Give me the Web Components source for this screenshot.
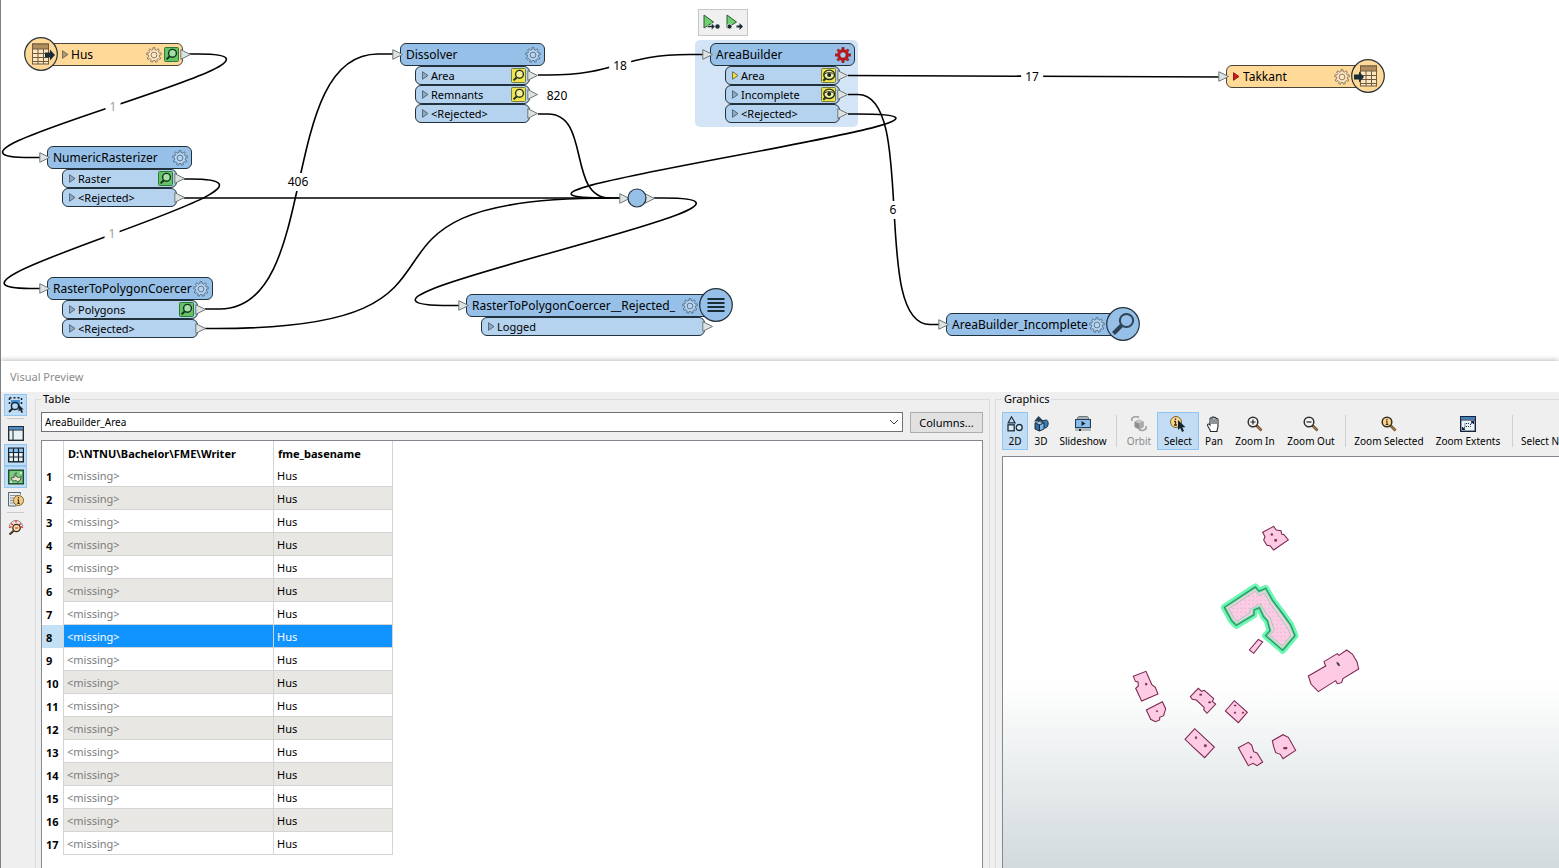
<!DOCTYPE html>
<html lang="en">
<head>
<meta charset="utf-8">
<title>FME Workbench</title>
<style>
  html, body { margin: 0; height: 100%; }
  body { font-family: "Noto Sans", "Open Sans", sans-serif; font-size: 11px; color: #000; overflow: hidden; background: #fff; }
</style>
</head>
<body>
<fme-app></fme-app>
<script>
function gear(cx, cy, ro, ri, n) {
  const p = [];
  for (let i = 0; i < n; i++) {
    const a = i * 2 * Math.PI / n - Math.PI / 2, w = Math.PI / n;
    for (const [d, r] of [[-.95, ri], [-.5, ri], [-.38, ro], [.38, ro], [.5, ri]])
      p.push((cx + r * Math.cos(a + d * w)).toFixed(2) + ',' + (cy + r * Math.sin(a + d * w)).toFixed(2));
  }
  return p.join(' ');
}
const lens = (fill, extra = '') => `<path d="M9.500 9.500L14.500 14.500" stroke="#5f4526" stroke-width="2.600"/><path d="M10 10l4.500 4.500" stroke="#a87b45" stroke-width="1.200"/><circle cx="6" cy="6" r="4.800" fill="${fill}" stroke="#33302c" stroke-width="1.500"/>${extra}`;
const bigTable = x => `<rect x="${x}" y="5" width="16" height="20" fill="#fde6bd" stroke="#6e5b42" /><rect x="${x}" y="5" width="16" height="5" fill="#b08d5c" stroke="#6e5b42"/><path d="M${x} 14.500h16M${x} 18.500h16M${x} 22.500h16M${x + 5.500} 10v15M${x + 11} 10v15" stroke="#6e5b42" fill="none"/>`;
const ICONS = {
  gear: ['0 0 16 16', `<polygon points="${gear(8, 8, 7.4, 5.5, 9)}" fill="#ffffff55" stroke="#4f6d8a" stroke-width=".9"/><circle cx="8" cy="8" r="2.900" fill="none" stroke="#4f6d8a" stroke-width=".9"/>`],
  gearTan: ['0 0 16 16', `<polygon points="${gear(8, 8, 7.4, 5.5, 9)}" fill="#ffffff66" stroke="#84725a" stroke-width=".9"/><circle cx="8" cy="8" r="2.900" fill="none" stroke="#84725a" stroke-width=".9"/>`],
  gearRed: ['0 0 16 16', `<polygon points="${gear(8, 8, 7.6, 5.4, 8)}" fill="#c81414" stroke="#7c1010" stroke-width=".6"/><circle cx="8" cy="8" r="3.100" fill="#a9cdef" stroke="#7c1010" stroke-width=".6"/>`],
  green: ['0 0 15 15', `<rect x=".5" y=".5" width="14" height="14" rx="1" fill="#66c266" stroke="#2d7a37"/><path d="M5.800 9.200L2.600 12.400" stroke="#14301c" stroke-width="2"/><circle cx="8.500" cy="6.300" r="3.900" fill="#a5e0a8" stroke="#14301c" stroke-width="1.400"/>`],
  yellow: ['0 0 15 15', `<rect x=".5" y=".5" width="14" height="14" rx="1" fill="#f0e34e" stroke="#7a7c3c"/><path d="M5.800 9.200L2.600 12.400" stroke="#26331c" stroke-width="2"/><circle cx="8.500" cy="6.300" r="3.900" fill="#f6ef9a" stroke="#26331c" stroke-width="1.400"/>`],
  eye: ['0 0 15 15', `<rect x=".5" y=".5" width="14" height="14" rx="1" fill="#f0e34e" stroke="#7a7c3c"/><path d="M5 10L2.300 12.700" stroke="#26331c" stroke-width="2"/><ellipse cx="8.200" cy="6.800" rx="5.400" ry="4.700" fill="#f6ef9a" stroke="#26331c" stroke-width="1.400"/><path d="M3 6.800C5 3.900 11.400 3.900 13.400 6.800" stroke="#26331c" stroke-width="1"/><circle cx="8.200" cy="7" r="2" fill="#14222c"/>`],
  tri: ['0 0 8 9', `<path d="M1.500 .7L7 4.500L1.500 8.300Z" fill="#8fa9bf" stroke="#4b6274" stroke-width=".9"/>`],
  triTan: ['0 0 8 9', `<path d="M1.500 .7L7 4.500L1.500 8.300Z" fill="#b09a72" stroke="#6e6350" stroke-width=".9"/>`],
  triYellow: ['0 0 8 9', `<path d="M1.500 .7L7 4.500L1.500 8.300Z" fill="#f4e23c" stroke="#5e6444" stroke-width=".9"/>`],
  triRed: ['0 0 8 9', `<path d="M1.500 .7L7 4.500L1.500 8.300Z" fill="#d01a1a" stroke="#8a1010" stroke-width=".9"/>`],
  port: ['0 0 11 11', `<path d="M.8 .7L10.500 5.500L.8 10.300Z" fill="#dde2e2" stroke="#6f7878" stroke-width="1"/>`],
  reader: ['0 0 34 34', `<circle cx="17" cy="17" r="16.300" fill="#ffd998" stroke="#2b3238" stroke-width="1.200"/><g transform="translate(0 2)">${bigTable(8.5)}</g><path d="M21 15.500h5v-3l5 5.500l-5 5.500v-3h-5z" fill="#1b2c36"/>`],
  writer: ['0 0 34 34', `<circle cx="17" cy="17" r="16.300" fill="#ffd998" stroke="#2b3238" stroke-width="1.200"/><g transform="translate(0 2)">${bigTable(9.5)}</g><path d="M3 15.500h5v-3l5 5.500l-5 5.500v-3h-5z" fill="#1b2c36"/>`],
  logger: ['0 0 34 34', `<circle cx="17" cy="17" r="16.300" fill="#97c0e8" stroke="#22323c" stroke-width="1.200"/><path d="M8.500 11h17M8.500 15h17M8.500 19h17M8.500 23h17" stroke="#1b2c36" stroke-width="2.200"/>`],
  inspector: ['0 0 34 34', `<circle cx="17" cy="17" r="16.300" fill="#97c0e8" stroke="#22323c" stroke-width="1.200"/><path d="M15.500 18.500L7.500 26.500" stroke="#2f4254" stroke-width="4"/><circle cx="20.500" cy="13.500" r="6.600" fill="none" stroke="#2f4254" stroke-width="2"/>`],
  junction: ['0 0 20 20', `<circle cx="10" cy="10" r="9" fill="#97c0e8" stroke="#22323c" stroke-width="1.200"/>`],
  runTo: ['0 0 17 17', `<path d="M1 1L10.500 8L1 14Z" fill="#6ed06e" stroke="#2a5a34"/><path d="M4.500 11.500h4v-2.500l3.500 3.500l-3.500 3.500v-2.500h-4z" fill="#1b2c36" stroke="#efefef" stroke-width=".5"/><circle cx="14.500" cy="12.500" r="2.200" fill="#1b2c36"/>`],
  runFrom: ['0 0 17 17', `<path d="M1 1L10.500 8L1 14Z" fill="#6ed06e" stroke="#2a5a34"/><circle cx="3.500" cy="12.500" r="2.500" fill="#1b2c36" stroke="#efefef" stroke-width=".8"/><path d="M10.500 11.500h3v-2.500l3.500 3.500l-3.500 3.500v-2.500h-3z" fill="#1b2c36"/>`],
  selectArea: ['0 0 16 16', `<rect x="3" y="3" width="9" height="6" fill="#4a90d9"/><path d="M1.500 .8h12M1.500 1v8M13.500 1v7" stroke="#14242e" stroke-width="1.500" stroke-dasharray="2 2" fill="none"/><path d="M4.500 11.500L1 15" stroke="#14242e" stroke-width="2"/><circle cx="7" cy="9" r="3.600" fill="#b9d9f3" stroke="#14242e" stroke-width="1.500"/><path d="M10.500 7.500v7l1.600-1.500l1.400 3l1.500-.8l-1.300-2.700h2z" fill="#14242e"/>`],
  panel: ['0 0 16 16', `<rect x=".7" y="1.700" width="14.600" height="13.600" fill="#e9f2f4" stroke="#14242e" stroke-width="1.300"/><rect x="1.300" y="2" width="13.400" height="2.600" fill="#4a8fcb"/><path d="M1 5h14M5 5v10" stroke="#14242e" fill="none"/>`],
  grid: ['0 0 16 16', `<rect x=".7" y="1.200" width="14.600" height="13.600" fill="#e9f2f4" stroke="#14242e" stroke-width="1.400"/><rect x="1.300" y="1.700" width="13.400" height="3.800" fill="#8cc0ee"/><path d="M1 5.500h14M1 10h14M5.500 1v14M10.500 1v14" stroke="#14242e" stroke-width="1.200" fill="none"/>`],
  map: ['0 0 16 16', `<rect x=".7" y="1.200" width="14.600" height="13.600" fill="#7ccb80" stroke="#1c4a2c" stroke-width="1.400"/><path d="M3 9l3.200-.6v-2.600l2-2.300l-.6 3.700l3 1.300l2.600-1l-.8 3.500l-1.600 1l-.8 1.500l-1.400-1.800h-2.400l-1 .6z" fill="#eee2c6" stroke="#2a4436" stroke-width=".8"/><circle cx="3" cy="13" r="1" fill="#e8f5e8"/><circle cx="13" cy="4" r="1" fill="#e8f5e8"/>`],
  info: ['0 0 16 16', `<path d="M.5 1.500h12v2M.5 1v14h8" stroke="#5c6870" fill="#dfe6e8"/><path d="M2 4.500h9M2 7h5M2 9.500h4M2 12h5" stroke="#8a979e"/><circle cx="10.500" cy="9.500" r="5" fill="#f6cd80" stroke="#7c6233"/><path d="M10.500 8.500v4M10.500 6v1.400M9.500 8.800h1M9.300 12.300h2.500" stroke="#3c2f18" stroke-width="1.200"/>`],
  inspectRed: ['0 0 16 16', `<path d="M1 7C4 -.5 12 -.5 15 7" fill="#f6e4dc" stroke="#8d8078" stroke-width=".9"/><path d="M3 4.500l2 1.500M8 1.500v2M13 4.500l-2 1.500M1 8.500l2.500-.8M15 8.500l-2.500-.8" stroke="#d33" stroke-width="1.400"/><path d="M6 11.500L1.500 15.500" stroke="#4b3a2c" stroke-width="2.200"/><circle cx="8.500" cy="9" r="3.700" fill="#ffe0a0" stroke="#2f2a26" stroke-width="1.300"/><path d="M7 9h3" stroke="#e44" stroke-width="1.400"/>`],
  two: ['0 0 16 16', `<path d="M4.500 .8L8 6.800H1.200Z" fill="#c3dcf0" stroke="#1b2c3c" stroke-width="1.200"/><rect x="1" y="8.800" width="6.200" height="6" fill="#dcebf7" stroke="#1b2c3c" stroke-width="1.300"/><circle cx="12.200" cy="11.500" r="3" fill="#dcebf7" stroke="#1b2c3c" stroke-width="1.300"/>`],
  three: ['0 0 16 16', `<path d="M5.500 0L11 5.500H1z" fill="#22425c"/><path d="M9 5l4-1c3 0 3 8-1 8l-3-1z" fill="#3c7cb4" stroke="#1b2c3c"/><path d="M2 7l4.500 1.500V15L2 13z" fill="#2f6ca4" stroke="#1b2c3c"/><path d="M6.500 8.500L11 7v6l-4.500 2z" fill="#7cb4e4" stroke="#1b2c3c"/><path d="M2 7l4-1.500L11 7L6.500 8.500z" fill="#b9dcf6" stroke="#1b2c3c" stroke-width=".7"/>`],
  slide: ['0 0 16 16', `<path d="M2.500 1.500L4 .5h8l1.500 1v2h-11z" fill="#a8b2b6" stroke="#6d787e"/><path d="M.5 3.500h15v8H.5z" fill="#8ebdec" stroke="#22425c" stroke-width="1.200"/><path d="M6.500 5l4 2.500l-4 2.500z" fill="#14242e"/><path d="M0 12h16v3H0z" fill="#b2babd"/><path d="M4 13h2v2H4z" fill="#14242e"/>`],
  orbit: ['0 0 16 16', `<path d="M1 5C-.5 1 5 -.5 8 1.500M15 10c1.500 4-4 5.500-7 3.500" stroke="#a5a5a5" stroke-width="1.800" fill="none"/><path d="M3.500 5.500L8 3.500L12.500 5.500V11L8 13.500L3.500 11z" fill="#8e8e8e"/><path d="M3.500 5.500L8 7.500L12.500 5.500L8 3.500z" fill="#c6c6c6"/><path d="M8 7.500v6l4.500-2.500V5.500z" fill="#a9a9a9"/>`],
  select: ['0 0 16 16', `<circle cx="6" cy="6" r="5.500" fill="#f9d58f" stroke="#7c6233"/><path d="M5.500 5v4M5.500 2.500v1.500M4 5.300h1.500M4 9h3" stroke="#3c2f18" stroke-width="1.300"/><path d="M8 4v10l2.300-2l1.700 4l2-.9l-1.700-3.800H15.500z" fill="#14242e"/>`],
  pan: ['0 0 16 16', `<path d="M4.500 15.500C4 12.500 1.500 11 1.500 9c0-1.200 1.300-1.500 2.500 0V3c0-1.600 2-1.600 2 0v-1c0-1.600 2-1.600 2 0v0.500c0-1.600 2-1.600 2 0v1c0-1.400 2-1.400 2 0V10c0 2-1 3-1 5.500z" fill="#fff" stroke="#1f2a30" stroke-width="1.100"/><path d="M6 3v5M8 3v5M10 3.500V8" stroke="#1f2a30" stroke-width="1"/>`],
  zoomIn: ['0 0 16 16', lens('#f4f4f4', '<path d="M3.500 6h5M6 3.500v5" stroke="#222" stroke-width="1.200"/>')],
  zoomOut: ['0 0 16 16', lens('#f4f4f4', '<path d="M3.500 6h5" stroke="#222" stroke-width="1.200"/>')],
  zoomSel: ['0 0 16 16', lens('#fbd48a', '<path d="M6 5.300v3.200M6 3v1.200M5 5.300h1M4.800 8.500h2.500" stroke="#3c2f18" stroke-width="1.100"/>')],
  extents: ['0 0 16 16', `<rect x=".7" y=".7" width="14.600" height="14.600" fill="#edf4f8" stroke="#14243e" stroke-width="1.400"/><rect x="1.300" y="1" width="13.400" height="2.500" fill="#3f7fbe"/><path d="M1 4h14" stroke="#14243e"/><path d="M11 5.500h2.500V8M2.500 11v2.500H5M3 13l2-1.500M13 6l-2 1.500" stroke="#14243e" fill="none" stroke-width="1.100"/><path d="M5 10.500V7.500h5M6 10.500h4.500V8" stroke="#14243e" stroke-dasharray="1 1" fill="none"/>`],
  none: ['0 0 16 16', '']
};

class FmeIcon extends HTMLElement {
  connectedCallback() {
    if (this.shadowRoot) return;
    const [box, body] = ICONS[this.getAttribute('name')];
    const [, , w, h] = box.split(' ');
    this.attachShadow({ mode: 'open' }).innerHTML =
      `<style>:host{display:block;flex:none;width:${w}px;height:${h}px}svg{display:block}</style>
       <svg width="${w}" height="${h}" viewBox="${box}" fill="none" aria-hidden="true">${body}</svg>`;
  }
}
customElements.define('fme-icon', FmeIcon);

class FmePort extends HTMLElement {
  connectedCallback() {
    if (this.shadowRoot) return;
    const badge = this.getAttribute('badge');
    this.attachShadow({ mode: 'open' }).innerHTML = `<style>
      :host{display:flex;align-items:center;position:relative;box-sizing:border-box;height:19px;padding:0 3px 0 5px;border:1px solid #22323c;border-radius:6px;background:#b5d3ef;font-size:11px;line-height:17px}
      span{margin-left:2px;flex:1;white-space:nowrap}
      button{padding:0;border:0;background:none}
      .out{position:absolute;right:-9px;top:3px}</style>
      <fme-icon name="${this.getAttribute('tri') || 'tri'}"></fme-icon><span><slot></slot></span>
      ${badge ? `<button aria-label="Inspect"><fme-icon name="${badge}"></fme-icon></button>` : ''}
      <fme-icon class="out" name="port"></fme-icon>`;
  }
}
customElements.define('fme-port', FmePort);

class FmeNode extends HTMLElement {
  connectedCallback() {
    if (this.shadowRoot) return;
    const a = n => this.getAttribute(n), has = n => this.hasAttribute(n);
    this.attachShadow({ mode: 'open' }).innerHTML = `<style>
      :host{display:block;position:absolute}
      header{display:flex;align-items:center;position:relative;box-sizing:border-box;height:23px;border:1px solid #22323c;border-radius:6px;background:#97c0e8;padding:0 3px 0 5px;font-size:12px;line-height:21px}
      :host([tan]) header{background:#ffd998;border-color:#4a4438}
      :host([feature]) header{gap:3px}
      :host([feature][badge]) header{gap:2px}
      :host([lead]) header{padding-left:20px}
      :host([end]) header{padding-right:30px}
      .name{flex:1;white-space:nowrap}
      button{padding:0;border:0;background:none}
      .in{position:absolute;left:-9px;top:5px}
      .out{position:absolute;right:-9px;top:5px}
      .lead{position:absolute;left:-17px;top:-7px}
      .end{position:absolute;right:-5px;top:-7px}
      .ports{position:relative;margin:0 15px}</style>
      <header>${a('tri') ? `<fme-icon name="${a('tri')}"></fme-icon>` : ''}<span class="name">${a('name')}</span>
      <button aria-label="Parameters"><fme-icon name="${a('gear') || 'gear'}"></fme-icon></button>
      ${a('badge') ? `<button aria-label="Inspect"><fme-icon name="${a('badge')}"></fme-icon></button>` : ''}
      ${has('noin') ? '' : '<fme-icon class="in" name="port"></fme-icon>'}
      ${has('out') ? '<fme-icon class="out" name="port"></fme-icon>' : ''}
      ${a('lead') ? `<fme-icon class="lead" name="${a('lead')}"></fme-icon>` : ''}
      ${a('end') ? `<fme-icon class="end" name="${a('end')}"></fme-icon>` : ''}</header>
      <div class="ports"><slot></slot></div>`;
  }
}
customElements.define('fme-node', FmeNode);

class FmeCanvas extends HTMLElement {
  connectedCallback() {
    this.attachShadow({ mode: 'open' }).innerHTML = `<style>
      :host{display:block;position:relative;background:#fff;overflow:hidden}
      svg.links{position:absolute;left:0;top:0;width:100%;height:100%}
      .halo{position:absolute;left:695px;top:40px;width:163px;height:87px;border-radius:5px;background:#d3e4f7}
      .count{position:absolute;transform:translate(-50%,-50%);background:#fff;padding:0 4px;font-size:12px;line-height:18px}
      .dim{color:#9aa39a}
      .mini{position:absolute;left:698px;top:9px;display:flex;gap:6px;padding:4px;border:1px solid #c6c6c6;background:#f0f0f0}
      .mini button{padding:0;border:0;background:none}
      .junction{position:absolute;left:619px;top:188px;width:36px;height:20px}
      .junction fme-icon{position:absolute}</style>
    <div class="halo"></div>
    <svg class="links" fill="none" stroke="#000" stroke-width="1.600" aria-hidden="true">
      <path d="M189 54h10C339 54-110 157.500 30 157.500h12"/>
      <path d="M184 179h6C334 179-104 288.500 30 288.500h12"/>
      <path d="M184 198H622"/>
      <path d="M205 309h15C322 309 276 54 378 54h16"/>
      <path d="M205 328.500h11C522 328.500 304 198 610 198h12"/>
      <path d="M538 75h10C618 75 620 54.500 690 54.500h14"/>
      <path d="M538 114h10C591 114 567 198 610 198"/>
      <path d="M848 75.500C980 75.500 1090 77 1222 77"/>
      <path d="M848 94.500h10C918 94.500 870 324.500 930 324.500h11"/>
      <path d="M848 114h9C1057 114 410 198 610 198"/>
      <path d="M654 198h10C833 198 274 305.500 450 305.500h12"/>
    </svg>
    <span class="count dim" style="left:113px;top:107px">1</span>
    <span class="count dim" style="left:112px;top:234px">1</span>
    <span class="count" style="left:298px;top:182px">406</span>
    <span class="count" style="left:620px;top:66px">18</span>
    <span class="count" style="left:557px;top:96px">820</span>
    <span class="count" style="left:1032px;top:77px">17</span>
    <span class="count" style="left:893px;top:210px">6</span>
    <fme-node tan noin out feature lead="reader" tri="triTan" name="Hus" gear="gearTan" badge="green" style="left:40px;top:43px;width:143px"></fme-node>
    <fme-node name="NumericRasterizer" style="left:47px;top:146px;width:145px">
      <fme-port badge="green">Raster</fme-port><fme-port>&lt;Rejected&gt;</fme-port></fme-node>
    <fme-node name="RasterToPolygonCoercer" style="left:47px;top:277px;width:166px">
      <fme-port badge="green">Polygons</fme-port><fme-port>&lt;Rejected&gt;</fme-port></fme-node>
    <fme-node name="Dissolver" style="left:400px;top:43px;width:145px">
      <fme-port badge="yellow">Area</fme-port><fme-port badge="yellow">Remnants</fme-port><fme-port>&lt;Rejected&gt;</fme-port></fme-node>
    <fme-node name="AreaBuilder" gear="gearRed" style="left:710px;top:43px;width:145px">
      <fme-port tri="triYellow" badge="eye">Area</fme-port><fme-port badge="eye">Incomplete</fme-port><fme-port>&lt;Rejected&gt;</fme-port></fme-node>
    <fme-node name="RasterToPolygonCoercer__Rejected_" end="logger" style="left:466px;top:294px;width:263px">
      <fme-port style="width:224px">Logged</fme-port></fme-node>
    <fme-node name="AreaBuilder_Incomplete" end="inspector" style="left:946px;top:313px;width:190px"></fme-node>
    <fme-node tan feature tri="triRed" name="Takkant" gear="gearTan" end="writer" style="left:1226px;top:65px;width:155px"></fme-node>
    <div class="junction"><fme-icon name="port" style="left:0;top:5px"></fme-icon><fme-icon name="port" style="left:25px;top:5px"></fme-icon><fme-icon name="junction" style="left:8px;top:0"></fme-icon></div>
    <div class="mini"><button aria-label="Run to this"><fme-icon name="runTo"></fme-icon></button><button aria-label="Run from this"><fme-icon name="runFrom"></fme-icon></button></div>`;
  }
}
customElements.define('fme-canvas', FmeCanvas);

class ToolRail extends HTMLElement {
  connectedCallback() {
    const b = (n, l, on) => `<button aria-label="${l}" class="${on ? 'on' : ''}"><fme-icon name="${n}"></fme-icon></button>`;
    this.attachShadow({ mode: 'open' }).innerHTML = `<style>
      :host{display:flex;flex-direction:column;padding:2px 0 0 3px}
      button{box-sizing:border-box;width:23px;height:22px;border:1px solid transparent;background:none;padding:0;display:grid;place-items:center}
      .on{background:#c2ddf3;border-color:#8fc6f3}
      hr{box-sizing:border-box;width:17px;height:1px;margin:2px 3px 3px;border:0;background:#c9c9c9}</style>
      ${b('selectArea', 'Toggle selection', 1)}<hr>${b('panel', 'Display control')}${b('grid', 'Table view', 1)}${b('map', 'Graphics view', 1)}${b('info', 'Feature information')}<hr>${b('inspectRed', 'Inspect')}`;
  }
}
customElements.define('tool-rail', ToolRail);

class DataTable extends HTMLElement {
  connectedCallback() {
    const rows = Array.from({ length: 17 }, (_, i) =>
      `<tr class="${i === 7 ? 'sel' : ''}"><th scope="row">${i + 1}</th><td class="miss">&lt;missing&gt;</td><td>Hus</td></tr>`).join('');
    this.attachShadow({ mode: 'open' }).innerHTML = `<style>
      :host{display:block;border:1px solid #828790;border-bottom:0;background:#fff;overflow:hidden}
      table{border-spacing:0;table-layout:fixed;width:351px;font-size:11px;line-height:20px}
      th,td{box-sizing:border-box;height:23px;padding:2px 3px 0;text-align:left;border-right:1px solid #d4d4d4;white-space:nowrap}
      td{border-bottom:1px solid #d4d4d4}
      th{padding-left:4px}
      .miss{color:#7b7b7b}
      tbody tr:nth-child(even) td{background:#e8e7e3}
      tbody tr.sel td{background:#1193ff;color:#fff}
      tbody tr.sel th{background:#c4e0f5}</style>
      <table><colgroup><col style="width:22px"><col style="width:210px"><col style="width:119px"></colgroup>
      <thead><tr><th></th><th scope="col">D:\\NTNU\\Bachelor\\FME\\Writer</th><th scope="col">fme_basename</th></tr></thead>
      <tbody>${rows}</tbody></table>`;
  }
}
customElements.define('data-table', DataTable);

class GraphicsToolbar extends HTMLElement {
  connectedCallback() {
    const b = (n, l, w, c = '') => `<button class="${c}" style="width:${w}px" ${c === 'off' ? 'disabled' : ''}><fme-icon name="${n}"></fme-icon><span>${l}</span></button>`;
    this.attachShadow({ mode: 'open' }).innerHTML = `<style>
      :host{display:flex;height:38px;overflow:hidden}
      button{box-sizing:border-box;flex:none;display:flex;flex-direction:column;align-items:center;gap:2px;padding:3px 0 0;border:1px solid transparent;background:none;font:10px/14px "Noto Sans","Open Sans",sans-serif;color:#000;white-space:nowrap}
      .on{background:#c2ddf3;border-color:#8fc6f3}
      .off{color:#8a8a8a}
      i{flex:none;width:1px;margin:3px 4px;background:#cfcfcf}</style>
      ${b('two', '2D', 26, 'on')}${b('three', '3D', 26)}${b('slide', 'Slideshow', 58)}<i></i>${b('orbit', 'Orbit', 36, 'off')}${b('select', 'Select', 42, 'on')}${b('pan', 'Pan', 30)}${b('zoomIn', 'Zoom In', 52)}${b('zoomOut', 'Zoom Out', 60)}<i></i>${b('zoomSel', 'Zoom Selected', 78)}${b('extents', 'Zoom Extents', 80)}<i></i>${b('none', 'Select N', 46)}`;
  }
}
customElements.define('graphics-toolbar', GraphicsToolbar);

class GraphicsView extends HTMLElement {
  connectedCallback() {
    this.attachShadow({ mode: 'open' }).innerHTML = `<style>
      :host{display:block;border:1px solid #828790;border-right:0;border-bottom:0;background:linear-gradient(#fff 0,#fff 55%,#d2dadc 100%);overflow:hidden}
      svg{display:block}</style>
    <svg width="555" height="410" viewBox="1004 457 555 410" role="img" aria-label="Building footprints">
      <defs><pattern id="dots" width="12" height="12" patternUnits="userSpaceOnUse"><path d="M5 5h3v3h-3z" fill="#c3b3c8"/></pattern></defs>
      <g transform="translate(1120 510) scale(.33333)" fill="#fdcbe3" stroke="#7c2450" stroke-width="3.200">
        <path d="M431 67L464 49L472 60L486 62L488 72L495 74L508 90L464 120L454 108L443 105L434 90L438 80Z"/>
        <g stroke-linejoin="round">
          <path d="M316 292L409 231L420 244L440 235L460 270L490 310L515 345L528 377L491 421L440 377L453 362L445 332L434 320L421 293L405 300L405 314L352 346L338 332Z" stroke="#58d79c" stroke-width="20"/>
          <path d="M316 292L409 231L420 244L440 235L460 270L490 310L515 345L528 377L491 421L440 377L453 362L445 332L434 320L421 293L405 300L405 314L352 346L338 332Z" stroke="#6bffb5" stroke-width="19"/>
          <path d="M316 292L409 231L420 244L440 235L460 270L490 310L515 345L528 377L491 421L440 377L453 362L445 332L434 320L421 293L405 300L405 314L352 346L338 332Z" stroke="#62e3a4" stroke-width="9"/>
        </g>
        <path d="M329 296L408 244L420 256L437 249L452 278L480 318L504 351L516 377L490 408L452 376L466 360L454 324L442 312L424 281L393 298L394 307L355 334L346 326Z" stroke="#5fd49b" stroke-width="2"/>
        <path d="M329 296L408 244L420 256L437 249L452 278L480 318L504 351L516 377L490 408L452 376L466 360L454 324L442 312L424 281L393 298L394 307L355 334L346 326Z" stroke="none" fill="url(#dots)"/>
        <path d="M316 292L409 231L420 244L440 235L460 270L490 310L515 345L528 377L491 421L440 377L453 362L445 332L434 320L421 293L405 300L405 314L352 346L338 332Z" fill="none" stroke="#278a5c"/>
        <path d="M391 420L418 388L431 396L404 430Z"/>
        <path d="M568 498L620 468L615 455L655 431L660 436L683 420L700 432L714 455L719 477L672 506L668 518L655 521L650 512L598 545L576 522Z"/>
        <path d="M43 499L81 484L98 523L109 532L117 552L68 573L50 535L58 528L57 516L49 514Z"/>
        <path d="M82 600L130 575L140 596L134 617L122 622L122 630L109 635L95 628Z"/>
        <path d="M214 560L238 535L248 544L256 541L284 566L280 574L290 582L264 610L254 599L256 593L232 570L220 568Z"/>
        <path d="M319 603L346 572L385 607L358 638Z"/>
        <path d="M198 688L227 656L286 711L257 743L224 713Z"/>
        <path d="M358 713L388 697L398 705L404 725L414 729L431 756L414 767L402 760L388 767Z"/>
        <path d="M460 692L492 674L508 682L530 721L492 746L484 733L470 728L464 710Z"/>
        <path d="M456 71h5v5h-5zM467 88h6v6h-6zM79 520h5v5h-5zM112 602h4v3h-4zM242 552h6v4h-6zM269 575h6v4h-6zM346 585h5v3h-5zM346 606h4v4h-4zM370 606h4v4h-4zM229 680h4v6h-4zM256 704h6v6h-6zM394 740h4v4h-4zM494 712h10v5h-10z" fill="#7c2450" stroke-width="1.500"/>
        <path d="M653 456l6 3l4 8l-4 1l-5-6z" fill="#175a1c" stroke-width="1"/>
      </g>
    </svg>`;
  }
}
customElements.define('graphics-view', GraphicsView);

class VisualPreview extends HTMLElement {
  connectedCallback() {
    this.attachShadow({ mode: 'open' }).innerHTML = `<style>
      :host{display:flex;flex-direction:column;position:relative;background:#efefef;box-shadow:0 -1px 5px #0004;min-height:0}
      h1{margin:0;padding:0 9px;height:31px;background:#fff;font-size:11px;font-weight:400;line-height:31px;color:#8c8c8c}
      .body{flex:1;min-height:0;display:grid;grid-template-columns:34px minmax(0,960fr) minmax(0,564fr)}
      fieldset{display:flex;flex-direction:column;min-width:0;min-height:0;margin:0;border:1px solid #dcdcdc;border-bottom:0;padding:6px 6px 0 5px}
      legend{padding:0 2px;font-size:11px;line-height:14px}
      .table{margin-right:5px}
      .gfx{border-right:0;padding:6px 0 0 6px}
      .bar{display:flex;gap:7px;margin-bottom:7px}
      .pick{flex:1;position:relative}
      select{box-sizing:border-box;width:100%;height:20px;margin:0;padding:0 3px;border:1px solid #707070;border-radius:0;background:#fff;color:#000;appearance:none;font:10px/18px "Noto Sans","Open Sans",sans-serif}
      .pick svg{position:absolute;right:4px;top:7px}
      .bar button{width:73px;height:21px;padding:0;border:1px solid #adadad;background:#e1e1e1;font:11px/18px "Noto Sans","Open Sans",sans-serif;color:#000}
      data-table,graphics-view{flex:1;min-height:0}
      graphics-toolbar{margin-bottom:6px}</style>
      <h1>Visual Preview</h1>
      <div class="body">
        <tool-rail></tool-rail>
        <fieldset class="table"><legend>Table</legend>
          <div class="bar"><div class="pick"><select aria-label="Feature type"><option>AreaBuilder_Area</option></select>
            <svg width="10" height="6" viewBox="0 0 10 6" fill="none" stroke="#444" aria-hidden="true"><path d="M1 1l4 4l4-4"/></svg></div>
            <button>Columns...</button></div>
          <data-table></data-table>
        </fieldset>
        <fieldset class="gfx"><legend>Graphics</legend>
          <graphics-toolbar></graphics-toolbar>
          <graphics-view></graphics-view>
        </fieldset>
      </div>`;
  }
}
customElements.define('visual-preview', VisualPreview);

class FmeApp extends HTMLElement {
  connectedCallback() {
    this.attachShadow({ mode: 'open' }).innerHTML = `<style>
      :host{display:flex;flex-direction:column;height:100vh;position:relative}
      fme-canvas{flex:0 0 361px}
      visual-preview{flex:1;margin-left:1px}
      :host::after{content:"";position:absolute;left:0;top:0;bottom:0;width:1px;background:#7b808a}</style>
      <fme-canvas></fme-canvas><visual-preview></visual-preview>`;
  }
}
customElements.define('fme-app', FmeApp);
</script>
</body>
</html>
